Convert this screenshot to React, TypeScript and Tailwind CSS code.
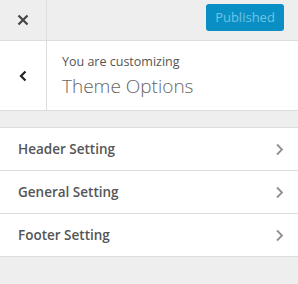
import React from "react";

const Chevron = () => (
  <svg width="9" height="13" viewBox="0 0 9 13" fill="none">
    <path d="M2 1.5 L7 6.5 L2 11.5" stroke="#8f8f8f" strokeWidth="1.8" />
  </svg>
);

export default function App() {
  const items = ["Header Setting", "General Setting", "Footer Setting"];
  return (
    <div
      className="w-[298px] h-[284px] bg-[#eeeeee] flex flex-col text-[#555d66]"
      style={{ fontFamily: '"Open Sans", "Noto Sans", sans-serif' }}
    >
      <div className="h-[41px] flex border-b border-[#dddddd] shrink-0">
        <div className="w-[47px] border-r border-[#dddddd] flex items-center justify-center">
          <svg width="12" height="12" viewBox="0 0 12 12">
            <path d="M1.5 1.5 L10.5 10.5 M10.5 1.5 L1.5 10.5" stroke="#444" strokeWidth="2.2" />
          </svg>
        </div>
        <div className="flex-1 flex items-start justify-end pt-[4px] pr-[14px]">
          <div className="w-[78px] h-[27px] rounded-[3px] bg-[#0a8fc4] text-[#6fc3e6] text-[13px] flex items-center justify-center">
            Published
          </div>
        </div>
      </div>
      <div className="h-[70px] bg-white flex border-b border-[#dddddd] shrink-0">
        <div className="w-[47px] border-r border-[#dddddd] flex items-center justify-center">
          <svg width="8" height="12" viewBox="0 0 8 12">
            <path d="M6.5 1.5 L2 6 L6.5 10.5" stroke="#222" strokeWidth="2.2" fill="none" />
          </svg>
        </div>
        <div className="flex-1 pl-[15px] pt-[12px]">
          <div className="text-[12.5px] leading-[17px] text-[#555]">You are customizing</div>
          <div className="text-[19px] leading-[26px] font-light text-[#666] mt-[3px]">Theme Options</div>
        </div>
      </div>
      <div className="h-[16px] shrink-0" />
      <div className="bg-white border-t border-[#dddddd]">
        {items.map((t) => (
          <div
            key={t}
            className="h-[43px] flex items-center justify-between pl-[18px] pr-[14px] border-b border-[#dddddd]"
          >
            <span className="text-[13.5px] font-semibold text-[#555]">{t}</span>
            <Chevron />
          </div>
        ))}
      </div>
    </div>
  );
}
